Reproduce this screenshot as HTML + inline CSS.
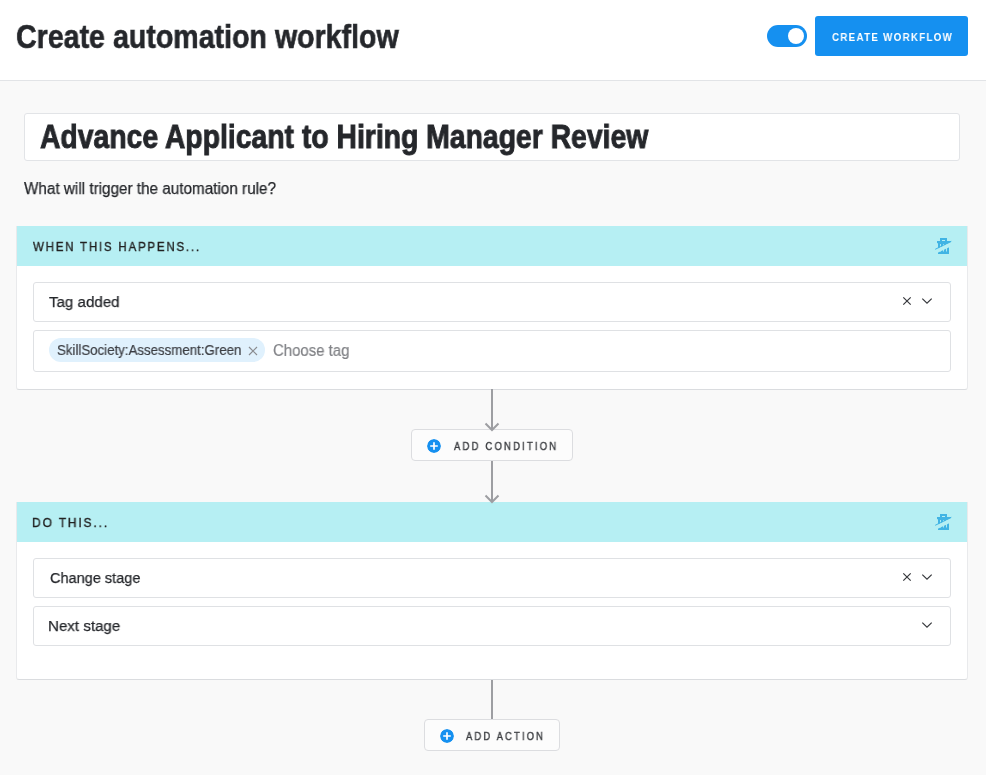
<!DOCTYPE html>
<html><head><meta charset="utf-8">
<style>
*{box-sizing:border-box;margin:0;padding:0}
html,body{width:986px;height:775px;overflow:hidden;background:#f9f9f9;font-family:"Liberation Sans",sans-serif;color:#25272b}
.tx{position:absolute;white-space:nowrap;transform-origin:0 0;line-height:1;will-change:transform}
#hdr{position:absolute;left:0;top:0;width:986px;height:81px;background:#fff;border-bottom:1px solid #e2e4e7}
#toggle{position:absolute;left:767px;top:25px;width:40px;height:22px;border-radius:11px;background:#1590f0}
#toggle i{position:absolute;left:21px;top:3px;width:16px;height:16px;border-radius:50%;background:#fff}
#cbtn{position:absolute;left:815px;top:16px;width:153px;height:40px;border-radius:3px;background:#1590f0}
#title{position:absolute;left:24px;top:113px;width:936px;height:48px;background:#fff;border:1px solid #e2e4e7;border-radius:3px}
.card{position:absolute;left:16px;width:952px;background:#fff;border:1px solid #e9eaec;border-top:0;border-bottom:1px solid #dadcdf;border-radius:0 0 3px 3px}
.ch{position:absolute;left:0;top:0;width:950px;height:40px;background:#b6eff3}
.sel{position:absolute;left:16px;width:918px;height:40px;border:1px solid #dfe1e4;border-radius:3px;background:#fff}
.line{position:absolute;left:491px;width:2px;background:#9d9ea2}
.addbtn{position:absolute;height:32px;border:1px solid #dcdde0;border-radius:4px;background:#fcfcfc}
.plus{position:absolute;width:14px;height:14px;border-radius:50%;background:#1590f0}
.hd{font-size:13px;letter-spacing:2px;color:#222;-webkit-text-stroke:.35px #222}
.st{font-size:15.5px;color:#25272b;-webkit-text-stroke:.25px #25272b}
.ab{font-size:11px;letter-spacing:2.5px;color:#3c3e42;-webkit-text-stroke:.4px #3c3e42}
</style></head><body>
<div id="hdr">
 <div id="toggle"><i></i></div>
 <div id="cbtn"></div>
</div>
<div id="title"></div>

<div class="card" style="top:226px;height:164px">
 <div class="ch"></div>
 <div class="sel" style="top:56px"></div>
 <div class="sel" style="top:104px;height:42px"></div>
</div>
<div class="line" style="top:389px;height:41px"></div>
<div class="addbtn" style="left:411px;top:429px;width:162px"><svg class="plus" style="left:15px;top:9px;background:none" width="14" height="14" viewBox="0 0 14 14"><circle cx="7" cy="7" r="7" fill="#1590f0"/><path d="M7 3.2V10.8M3.2 7H10.8" stroke="#fff" stroke-width="1.7"/></svg></div>
<div class="line" style="top:461px;height:41px"></div>

<div class="card" style="top:502px;height:178px">
 <div class="ch"></div>
 <div class="sel" style="top:56px"></div>
 <div class="sel" style="top:104px"></div>
</div>
<div class="line" style="top:680px;height:40px"></div>
<div class="addbtn" style="left:424px;top:719px;width:136px"><svg class="plus" style="left:15px;top:9px;background:none" width="14" height="14" viewBox="0 0 14 14"><circle cx="7" cy="7" r="7" fill="#1590f0"/><path d="M7 3.2V10.8M3.2 7H10.8" stroke="#fff" stroke-width="1.7"/></svg></div>

<!-- texts -->
<div id="t1" class="tx" style="left:15.6px;top:20px;transform:scaleX(0.8660);font-size:33px;font-weight:bold;-webkit-text-stroke:.6px #25272b">Create automation workflow</div>
<div id="t2" class="tx" style="left:39.6px;top:120px;transform:scaleX(0.8586);font-size:33px;font-weight:bold;-webkit-text-stroke:.9px #25272b">Advance Applicant to Hiring Manager Review</div>
<div id="t3" class="tx" style="left:23.6px;top:181px;transform:scaleX(0.9540);font-size:16px;-webkit-text-stroke:.25px #25272b">What will trigger the automation rule?</div>
<div id="t4" class="tx hd" style="left:32.6px;top:240px;transform:scaleX(0.8867)">WHEN THIS HAPPENS...</div>
<div id="t5" class="tx st" style="left:48.6px;top:293.9px;transform:scaleX(0.9745)">Tag added</div>
<div id="t8" class="tx ab" style="left:453.6px;top:440.5px;transform:scaleX(0.8660)">ADD CONDITION</div>
<div id="t9" class="tx hd" style="left:31.6px;top:516px;transform:scaleX(0.9239)">DO THIS...</div>
<div id="t10" class="tx st" style="left:49.6px;top:569.9px;transform:scaleX(0.9363)">Change stage</div>
<div id="t11" class="tx st" style="left:47.5px;top:617.9px;transform:scaleX(0.9750)">Next stage</div>
<div id="t12" class="tx ab" style="left:465.6px;top:730.5px;transform:scaleX(0.8573)">ADD ACTION</div>
<div id="t13" class="tx" style="left:831.6px;top:32px;transform:scaleX(0.8509);font-size:11.5px;font-weight:bold;color:#fff;letter-spacing:1.5px">CREATE WORKFLOW</div>

<div id="chip" style="position:absolute;left:49px;top:338px;width:216px;height:24px;border-radius:12px;background:#e0f1fd"></div>
<div id="t6" class="tx" style="left:56.6px;top:343px;transform:scaleX(0.9480);font-size:14px;color:#3b3d42;-webkit-text-stroke:.2px #3b3d42">SkillSociety:Assessment:Green</div>
<svg style="position:absolute;left:248px;top:346px" width="10" height="10" viewBox="0 0 10 10"><path d="M1 1L9 9M9 1L1 9" stroke="#8a8c90" stroke-width="1.2"/></svg>
<div id="t7" class="tx" style="left:272.6px;top:343px;transform:scaleX(0.9339);font-size:16px;color:#808286;-webkit-text-stroke:.2px #808286">Choose tag</div>
<svg style="position:absolute;left:902px;top:296px" width="10" height="10" viewBox="0 0 10 10"><path d="M1.3 1.3L8.7 8.7M8.7 1.3L1.3 8.7" stroke="#37393d" stroke-width="1.2"/></svg>
<svg style="position:absolute;left:921px;top:297px" width="12" height="8" viewBox="0 0 12 8"><path d="M1.3 1.6L6 6.2L10.7 1.6" fill="none" stroke="#37393d" stroke-width="1.2"/></svg>
<svg style="position:absolute;left:902px;top:572px" width="10" height="10" viewBox="0 0 10 10"><path d="M1.3 1.3L8.7 8.7M8.7 1.3L1.3 8.7" stroke="#37393d" stroke-width="1.2"/></svg>
<svg style="position:absolute;left:921px;top:573px" width="12" height="8" viewBox="0 0 12 8"><path d="M1.3 1.6L6 6.2L10.7 1.6" fill="none" stroke="#37393d" stroke-width="1.2"/></svg>
<svg style="position:absolute;left:921px;top:621px" width="12" height="8" viewBox="0 0 12 8"><path d="M1.3 1.6L6 6.2L10.7 1.6" fill="none" stroke="#37393d" stroke-width="1.2"/></svg>
<svg style="position:absolute;left:930px;top:234px" width="26" height="24" viewBox="0 0 26 24"><g fill="#41b4e4"><path d="M10 4h7v3h-2v-1h-3v1h-2z"/><rect x="7" y="7" width="14" height="2.2"/><path d="M8 9h11v11h-11z M10.1 10v7.6h.9v-7.6z M13.1 10v7.6h.9v-7.6z M16.1 10v7.6h.9v-7.6z" fill-rule="evenodd"/></g><path d="M0 18.3L26 5.4L26 10L0 22.4z" fill="#b6eff3"/><path d="M5.2 15.3L21.3 7.3" stroke="#41b4e4" stroke-width="1"/></svg>
<svg style="position:absolute;left:930px;top:510px" width="26" height="24" viewBox="0 0 26 24"><g fill="#41b4e4"><path d="M10 4h7v3h-2v-1h-3v1h-2z"/><rect x="7" y="7" width="14" height="2.2"/><path d="M8 9h11v11h-11z M10.1 10v7.6h.9v-7.6z M13.1 10v7.6h.9v-7.6z M16.1 10v7.6h.9v-7.6z" fill-rule="evenodd"/></g><path d="M0 18.3L26 5.4L26 10L0 22.4z" fill="#b6eff3"/><path d="M5.2 15.3L21.3 7.3" stroke="#41b4e4" stroke-width="1"/></svg>
<svg style="position:absolute;left:484px;top:420px" width="16" height="12" viewBox="0 0 16 12"><path d="M1.5 3.5L8 10L14.5 3.5" fill="none" stroke="#9d9ea2" stroke-width="2"/></svg>
<svg style="position:absolute;left:484px;top:492px" width="16" height="12" viewBox="0 0 16 12"><path d="M1.5 3.5L8 10L14.5 3.5" fill="none" stroke="#9d9ea2" stroke-width="2"/></svg>
</body></html>
